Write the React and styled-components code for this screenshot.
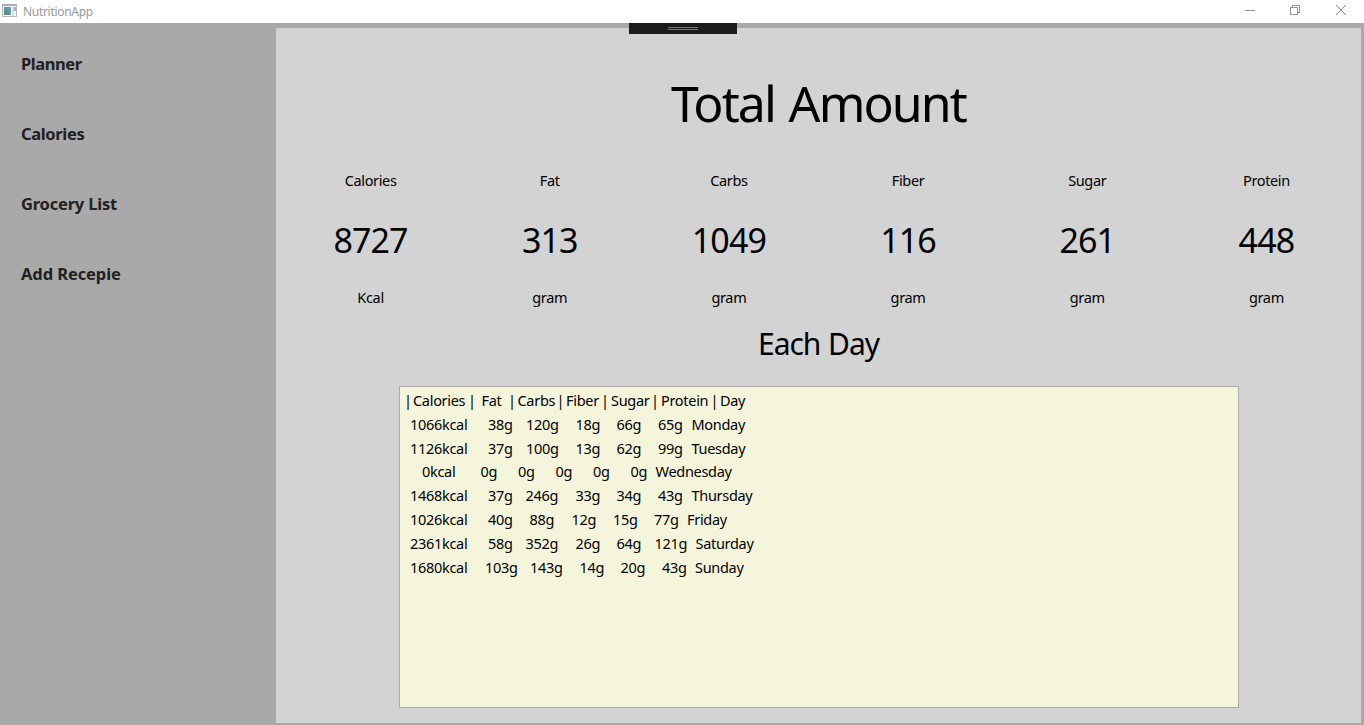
import React from "react";
import styled, { createGlobalStyle } from "styled-components";

const GlobalStyle = createGlobalStyle`
  * { box-sizing: border-box; }
  body {
    margin: 0;
    overflow: hidden;
    background: #a9a9a9;
    color: #000;
    font-family: "Noto Sans", "Open Sans", sans-serif;
  }
`;

const Window = styled.div`
  display: flex;
  flex-direction: column;
  width: 1364px;
  height: 725px;
`;

const TitleBar = styled.header`
  display: flex;
  align-items: flex-start;
  height: 23px;
  padding: 4px 17px 0 2px;
  background: #fff;
`;

const AppTitle = styled.div`
  flex: 1;
  margin-left: 5px;
  font-size: 12px;
  line-height: 16px;
  letter-spacing: -0.3px;
  color: #999;
`;

const WindowButtons = styled.div`
  display: flex;
  gap: 34px;
`;

const Body = styled.div`
  position: relative;
  display: flex;
  flex: 1;
  padding: 5px 3px 2px 0;
`;

const DebugHandle = styled.div`
  position: absolute;
  top: 0;
  left: 629px;
  display: flex;
  flex-direction: column;
  align-items: center;
  gap: 1px;
  width: 108px;
  height: 11px;
  padding-top: 4px;
  background: #1b1b1c;
`;

const HandleLine = styled.span`
  width: 30px;
  height: 1px;
  background: #777;
`;

const Sidebar = styled.nav`
  display: flex;
  flex-direction: column;
  gap: 46px;
  width: 276px;
  padding: 24px 0 0 21px;
`;

const NavItem = styled.a`
  height: 24px;
  line-height: 24px;
  font-size: 16.5px;
  font-weight: 700;
  letter-spacing: ${(p) => p.$spacing}px;
  color: #212121;
`;

const Main = styled.main`
  display: flex;
  flex: 1;
  flex-direction: column;
  align-items: center;
  background: #d3d3d3;
`;

const Title = styled.h1`
  margin: 40px 0 0;
  height: 70px;
  line-height: 70px;
  font-size: 50px;
  font-weight: 400;
  letter-spacing: -1.9px;
  word-spacing: 2.5px;
`;

const Totals = styled.section`
  display: grid;
  grid-template-columns: repeat(6, 1fr);
  width: 1075px;
  margin-top: 32px;
`;

const Total = styled.div`
  display: flex;
  flex-direction: column;
  align-items: center;
`;

const Label = styled.span`
  height: 20px;
  line-height: 20px;
  font-size: 14.5px;
  letter-spacing: -0.35px;
`;

const Amount = styled.span`
  height: 50px;
  margin: 25px 0 22px;
  line-height: 50px;
  font-size: 34px;
  letter-spacing: -0.9px;
`;

const Subtitle = styled.h2`
  margin: 17px 0 0;
  height: 40px;
  line-height: 40px;
  font-size: 30px;
  font-weight: 400;
  letter-spacing: -1.05px;
  word-spacing: 1px;
`;

const DayList = styled.div`
  width: 840px;
  height: 322px;
  margin-top: 22px;
  padding-top: 1px;
  border: 1px solid #abadb3;
  background: #f5f5dc;
`;

const DayRow = styled.div`
  display: flex;
  height: 23.8px;
  padding-left: ${(p) => p.$indent}px;
  line-height: 24px;
  font-size: 14.5px;
  letter-spacing: -0.3px;
`;

const Cell = styled.span`
  flex: none;
  width: ${(p) => p.$width}px;
  white-space: nowrap;
`;

const pages = [
  ["Planner", -0.45],
  ["Calories", -0.35],
  ["Grocery List", -0.2],
  ["Add Recepie", -0.1],
];

const totals = [
  ["Calories", 8727, "Kcal"],
  ["Fat", 313, "gram"],
  ["Carbs", 1049, "gram"],
  ["Fiber", 116, "gram"],
  ["Sugar", 261, "gram"],
  ["Protein", 448, "gram"],
];

// Each cell is [text, advance to the next cell].
const days = [
  [4.5, [["|", 9], ["Calories", 55], ["|", 13.5], ["Fat", 26.5], ["|", 9.5], ["Carbs", 39], ["|", 9.5], ["Fiber", 35], ["|", 10], ["Sugar", 40], ["|", 10], ["Protein", 49.5], ["|", 9.5], ["Day", 40]]],
  [10.5, [["1066kcal", 78], ["38g", 38], ["120g", 49.5], ["18g", 41], ["66g", 41.5], ["65g", 33.5], ["Monday", 60]]],
  [10.5, [["1126kcal", 78], ["37g", 38], ["100g", 49.5], ["13g", 41], ["62g", 41.5], ["99g", 33.5], ["Tuesday", 60]]],
  [22.5, [["0kcal", 58.5], ["0g", 37.5], ["0g", 37.5], ["0g", 37.5], ["0g", 37.5], ["0g", 25], ["Wednesday", 90]]],
  [10.5, [["1468kcal", 78], ["37g", 37.5], ["246g", 50], ["33g", 41], ["34g", 41.5], ["43g", 33.5], ["Thursday", 70]]],
  [10.5, [["1026kcal", 78], ["40g", 41.5], ["88g", 42], ["12g", 41.5], ["15g", 41], ["77g", 33], ["Friday", 60]]],
  [10.5, [["2361kcal", 78], ["58g", 37.5], ["352g", 50], ["26g", 41], ["64g", 38], ["121g", 41], ["Saturday", 70]]],
  [10.5, [["1680kcal", 75], ["103g", 45], ["143g", 49.5], ["14g", 41], ["20g", 41.5], ["43g", 33], ["Sunday", 60]]],
];

function AppIcon() {
  return (
    <svg width="16" height="14" viewBox="0 0 16 14" shapeRendering="crispEdges">
      <rect x="0.5" y="0.5" width="14" height="12" fill="#f5f6f7" stroke="#b4b8be" />
      <rect x="0" y="0" width="15" height="2" fill="#a9adb5" />
      <rect x="2" y="3" width="7" height="8" fill="#5c98a5" />
      <rect x="2" y="7" width="5" height="4" fill="#559678" />
      <rect x="7" y="3" width="2" height="8" fill="#7894b8" />
      <rect x="10" y="3" width="2" height="9" fill="#dcdde0" />
      <rect x="12" y="3" width="2" height="4" fill="#8fb3c0" />
    </svg>
  );
}

function MinimizeIcon() {
  return (
    <svg width="12" height="12" viewBox="0 0 12 12" shapeRendering="crispEdges">
      <path d="M2 6.5h10" stroke="#999" fill="none" />
    </svg>
  );
}

function RestoreIcon() {
  return (
    <svg width="12" height="12" viewBox="0 0 12 12" shapeRendering="crispEdges">
      <path d="M1.5 3.5h7v7h-7zM3.5 3V1.5h7v7H9" stroke="#999" fill="none" />
    </svg>
  );
}

function CloseIcon() {
  return (
    <svg width="12" height="12" viewBox="0 0 12 12">
      <path d="M1 1l10 10M11 1L1 11" stroke="#8c8c8c" fill="none" />
    </svg>
  );
}

export default function App() {
  return (
    <Window>
      <GlobalStyle />
      <TitleBar>
        <AppIcon />
        <AppTitle>NutritionApp</AppTitle>
        <WindowButtons>
          <MinimizeIcon />
          <RestoreIcon />
          <CloseIcon />
        </WindowButtons>
      </TitleBar>
      <Body>
        <Sidebar>
          {pages.map(([name, spacing]) => (
            <NavItem key={name} $spacing={spacing}>{name}</NavItem>
          ))}
        </Sidebar>
        <Main>
          <Title>Total Amount</Title>
          <Totals>
            {totals.map(([name, amount, unit]) => (
              <Total key={name}>
                <Label>{name}</Label>
                <Amount>{amount}</Amount>
                <Label>{unit}</Label>
              </Total>
            ))}
          </Totals>
          <Subtitle>Each Day</Subtitle>
          <DayList>
            {days.map(([indent, cells], row) => (
              <DayRow key={row} $indent={indent}>
                {cells.map(([text, width], i) => (
                  <Cell key={i} $width={width}>{text}</Cell>
                ))}
              </DayRow>
            ))}
          </DayList>
        </Main>
        <DebugHandle>
          <HandleLine />
          <HandleLine />
        </DebugHandle>
      </Body>
    </Window>
  );
}
